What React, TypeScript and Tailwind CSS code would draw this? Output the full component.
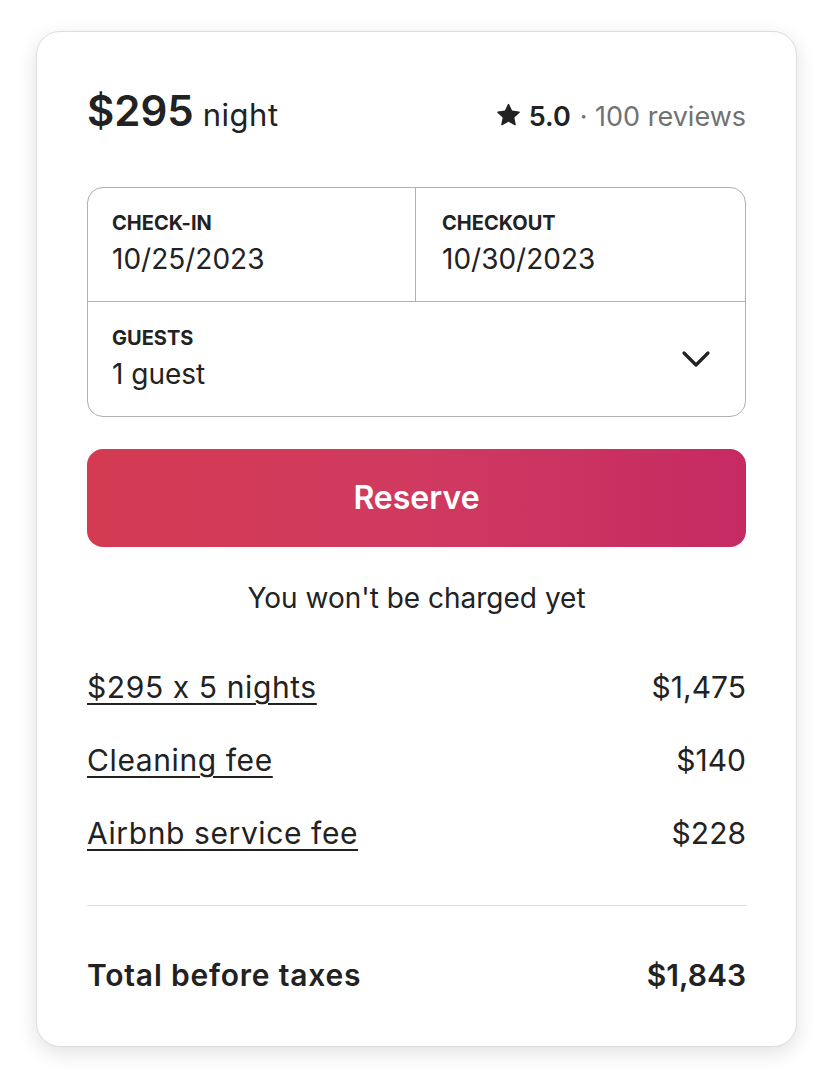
const font = { fontFamily: "Inter, 'Liberation Sans', sans-serif" };

function Star() {
  return (
    <svg viewBox="0 0 32 32" className="h-[23px] w-[23px] fill-[#222222]">
      <path d="M15.1 1.58l-4.13 8.88-9.86 1.27a1 1 0 0 0-.54 1.74l7.3 6.57-1.97 9.85a1 1 0 0 0 1.48 1.06l8.62-5 8.63 5a1 1 0 0 0 1.48-1.06l-1.97-9.85 7.3-6.57a1 1 0 0 0-.55-1.73l-9.86-1.28-4.12-8.88a1 1 0 0 0-1.82 0z" />
    </svg>
  );
}

function Chevron() {
  return (
    <svg viewBox="0 0 30 18" className="h-[18px] w-[30px]" fill="none">
      <path d="M3 3l12 12L27 3" stroke="#222222" strokeWidth="3.2" strokeLinecap="round" strokeLinejoin="round" />
    </svg>
  );
}

function FeeRow({ label, amount }: { label: string; amount: string }) {
  return (
    <div className="flex h-[73px] items-center justify-between text-[30px] text-[#222222]">
      <span className="tracking-[0.6px] underline decoration-[1.5px] underline-offset-[5px]">{label}</span>
      <span>{amount}</span>
    </div>
  );
}

export default function App() {
  return (
    <div className="min-h-screen bg-white px-[36px] pt-[31px] [font-feature-settings:'calt'_0]" style={font}>
      <div className="w-[761px] rounded-[24px] border border-[#dddddd] bg-white px-[50px] pb-[34px] pt-[55px] shadow-[0_6px_20px_rgba(0,0,0,0.12)]">
        <div className="flex h-[48px] items-baseline justify-between">
          <div className="flex items-baseline gap-[9px] text-[#222222]">
            <span className="text-[42px] font-semibold leading-[48px]">$295</span>
            <span className="text-[31px] tracking-[0.5px]">night</span>
          </div>
          <div className="flex items-baseline gap-[9px] text-[27px]">
            <Star />
            <span className="font-semibold text-[#222222]">5.0</span>
            <span className="text-[#717171]">· 100 reviews</span>
          </div>
        </div>

        <div className="mt-[52px] rounded-[16px] border border-[#b0b0b0]">
          <div className="flex h-[114px] border-b border-[#b0b0b0]">
            <div className="flex-1 border-r border-[#b0b0b0] pl-[24px] pt-[23px]">
              <div className="text-[20px] font-bold leading-[24px] text-[#222222]">CHECK-IN</div>
              <div className="mt-[7px] text-[28px] leading-[34px] text-[#222222]">10/25/2023</div>
            </div>
            <div className="flex-1 pl-[26px] pt-[23px]">
              <div className="text-[20px] font-bold leading-[24px] text-[#222222]">CHECKOUT</div>
              <div className="mt-[7px] text-[28px] leading-[34px] text-[#222222]">10/30/2023</div>
            </div>
          </div>
          <div className="flex h-[114px] items-center justify-between pl-[24px] pr-[34px]">
            <div className="-mt-[2px]">
              <div className="text-[20px] font-bold leading-[24px] text-[#222222]">GUESTS</div>
              <div className="mt-[7px] text-[28px] leading-[34px] text-[#222222]">1 guest</div>
            </div>
            <Chevron />
          </div>
        </div>

        <button className="mt-[32px] flex h-[98px] w-full items-center justify-center rounded-[16px] bg-gradient-to-r from-[#d43a52] via-[#d03a60] to-[#c52a62] text-[32px] font-semibold text-white">
          Reserve
        </button>

        <p className="mt-[34px] text-center text-[28px] leading-[34px] text-[#222222]">
          You won't be charged yet
        </p>

        <div className="mt-[36px]">
          <FeeRow label="$295 x 5 nights" amount="$1,475" />
          <FeeRow label="Cleaning fee" amount="$140" />
          <FeeRow label="Airbnb service fee" amount="$228" />
        </div>

        <div className="mt-[35px] border-t border-[#dddddd]" />

        <div className="mt-[33px] flex h-[73px] items-center justify-between text-[30px] font-semibold text-[#222222]">
          <span className="tracking-[0.8px]">Total before taxes</span>
          <span>$1,843</span>
        </div>
      </div>
    </div>
  );
}
